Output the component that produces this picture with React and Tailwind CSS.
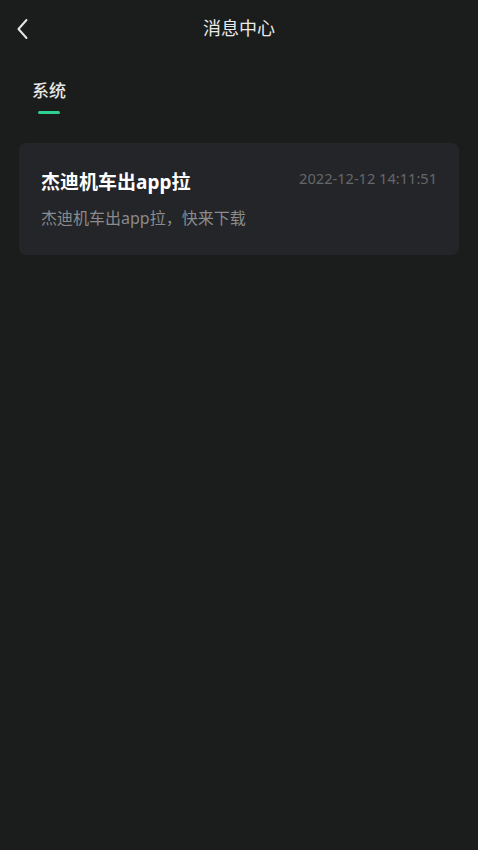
import React from 'react';

const font = { fontFamily: '"Noto Sans", "Noto Sans CJK SC", sans-serif' };

const messages = [
  {
    id: 1,
    title: '杰迪机车出app拉',
    time: '2022-12-12 14:11:51',
    content: '杰迪机车出app拉，快来下载',
  },
];

const App = () => {
  return (
    <div className="min-h-[850px] w-full bg-[#1b1c1c]" style={font}>
      {/* Header */}
      <header className="relative flex h-14 items-center justify-center">
        <button className="absolute left-[13px] top-[16px] p-0.5">
          <svg width="16" height="22" viewBox="0 0 16 22" fill="none">
            <path d="M11.5 2 L3.5 11 L11.5 20" stroke="#e6e6e6" strokeWidth="2" strokeLinecap="round" strokeLinejoin="round" />
          </svg>
        </button>
        <h1 className="text-[18px] text-[#e8e8e8]">消息中心</h1>
      </header>

      {/* Tabs */}
      <div className="flex px-[32px] pt-[21px]">
        <div className="flex flex-col items-center">
          <span className="text-[17px] font-medium leading-[28px] text-[#e6e6e6]">系统</span>
          <span className="mt-[6px] h-[3px] w-[22px] rounded-full bg-[#2ecf8f]" />
        </div>
      </div>

      {/* Messages */}
      <div className="mt-[29px] flex flex-col gap-3 px-[19px]">
        {messages.map((m) => (
          <div key={m.id} className="rounded-[7px] bg-[#242528] px-[22px] pb-[26px] pt-[25px]">
            <div className="flex items-start justify-between">
              <span className="text-[19px] font-bold leading-[28px] text-white">{m.title}</span>
              <span className="text-[14.6px] leading-[20px] text-[#666769]">{m.time}</span>
            </div>
            <p className="mt-[11px] text-[16px] leading-[22px] text-[#8a8b8d]">{m.content}</p>
          </div>
        ))}
      </div>
    </div>
  );
};

export default App;
